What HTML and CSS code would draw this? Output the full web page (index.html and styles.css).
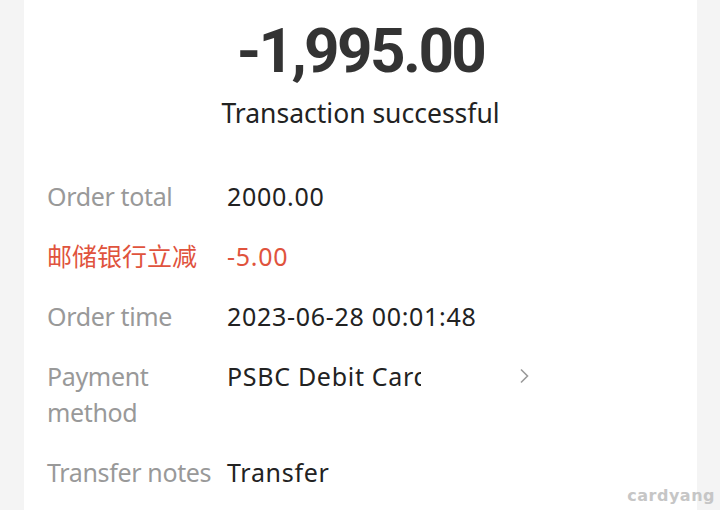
FILE: index.html
```html
<!DOCTYPE html>
<html>
<head>
<meta charset="utf-8">
<link rel="stylesheet" href="styles.css">
</head>
<body>
<div class="card">
  <div class="amount">-1,995.00</div>
  <div class="status">Transaction successful</div>
  <div class="rows">
    <div class="row">
      <div class="label">Order total</div>
      <div class="value">2000.00</div>
    </div>
    <div class="row red">
      <div class="label">邮储银行立减</div>
      <div class="value">-5.00</div>
    </div>
    <div class="row">
      <div class="label">Order time</div>
      <div class="value">2023-06-28 00:01:48</div>
    </div>
    <div class="row">
      <div class="label">Payment method</div>
      <div class="value clip">PSBC Debit Card</div>
      <svg class="chev" width="10" height="16" viewBox="0 0 10 16"><path d="M2 1.5 L8.5 8 L2 14.5" fill="none" stroke="#9a9a9a" stroke-width="1.6"/></svg>
    </div>
    <div class="row">
      <div class="label">Transfer notes</div>
      <div class="value">Transfer</div>
    </div>
  </div>
</div>
<div class="watermark">cardyang</div>
</body>
</html>
```
FILE: styles.css
```css
html, body {
  margin: 0;
  padding: 0;
  background: #f4f4f4;
  height: 510px;
  overflow: hidden;
}
body {
  font-family: "Noto Sans", "Noto Sans CJK SC", sans-serif;
  position: relative;
}
.card {
  margin: 0 23px 0 24px;
  background: #fff;
  height: 510px;
  padding-top: 13px;
  box-sizing: border-box;
}
.amount {
  text-align: center;
  font-family: Roboto, sans-serif;
  font-weight: 700;
  font-size: 62px;
  line-height: 76px;
  color: #333;
  letter-spacing: -2.6px;
}
.status {
  text-align: center;
  font-size: 26.5px;
  line-height: 36px;
  color: #222;
  margin-top: 6px;
}
.rows {
  margin-top: 47px;
  padding-left: 23px;
}
.row {
  display: flex;
  align-items: flex-start;
  font-size: 25px;
  line-height: 36px;
  margin-bottom: 24px;
}
.label {
  width: 172px;
  margin-right: 8px;
  color: #999;
  flex: none;
  letter-spacing: -0.35px;
}
.value {
  color: #222;
  white-space: nowrap;
  letter-spacing: 0.7px;
}
.value.clip {
  width: 194px;
  overflow: hidden;
  flex: none;
}
.row.red .label, .row.red .value {
  color: #e0533d;
}
.row.red .label {
  letter-spacing: 0;
}
.chev {
  margin-left: 98px;
  margin-top: 10px;
}
.watermark {
  position: absolute;
  right: 5px;
  bottom: 5px;
  font-family: "DejaVu Sans", sans-serif;
  font-weight: 700;
  font-size: 16px;
  color: #c6c6c6;
  letter-spacing: 0.5px;
}
```
